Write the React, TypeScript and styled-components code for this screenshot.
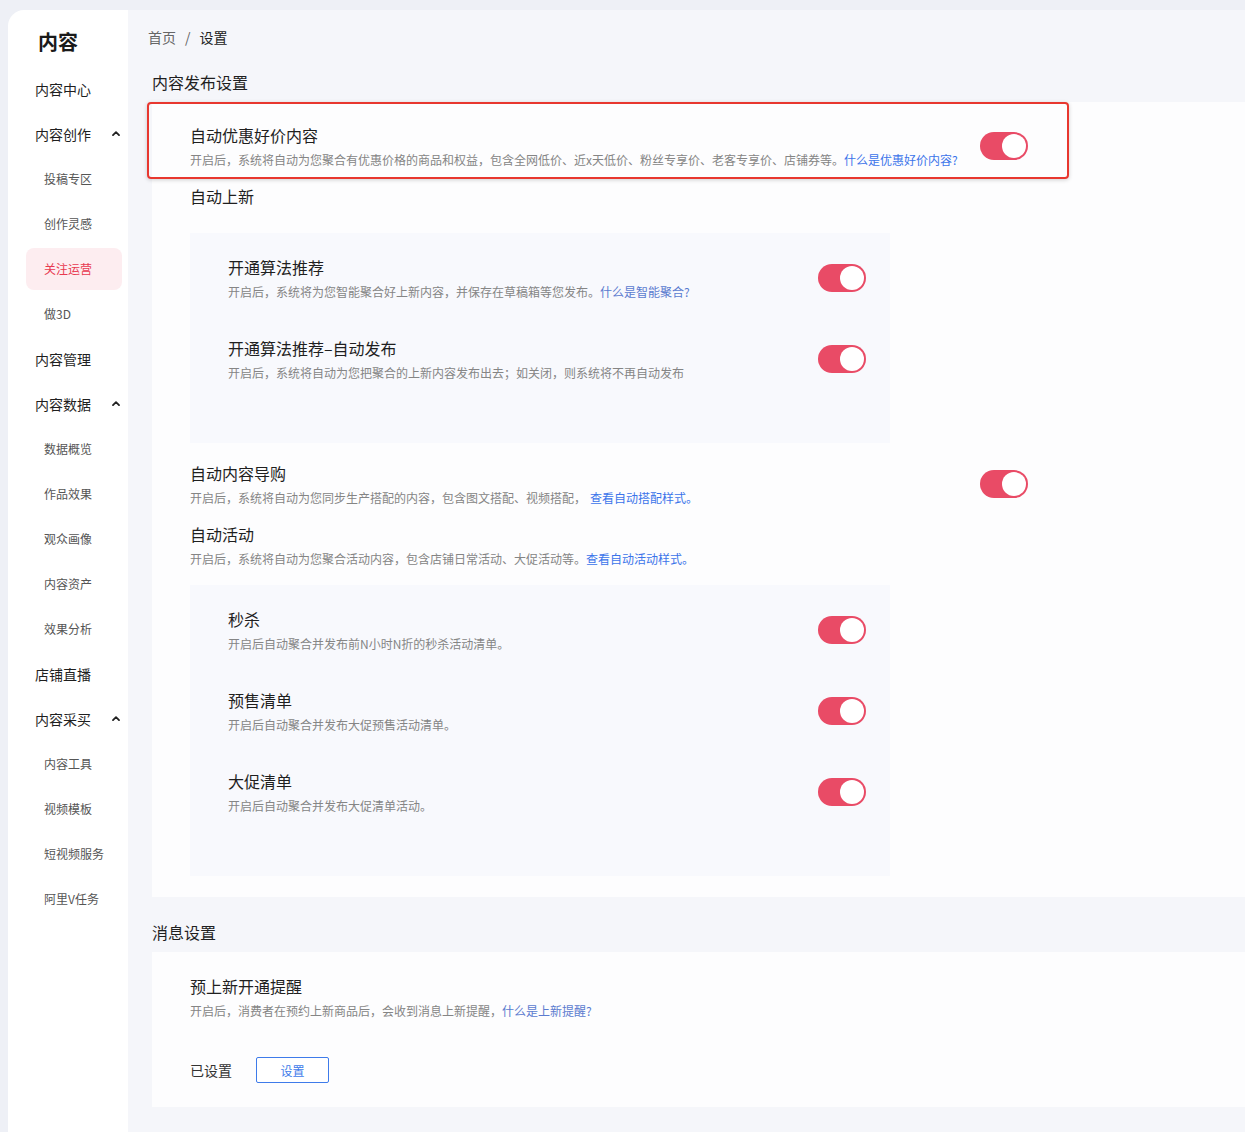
import React from "react";
import styled, { createGlobalStyle } from "styled-components";

const GlobalStyle = createGlobalStyle`
  body {
    margin: 0;
    background: #eef0f6;
    font-family: "Noto Sans CJK SC", "Noto Sans", sans-serif;
    color: #222;
  }
  * { box-sizing: border-box; }
`;

type MenuGroup = { label: string; children?: string[] };

const menu: MenuGroup[] = [
  { label: "内容中心" },
  { label: "内容创作", children: ["投稿专区", "创作灵感", "关注运营", "做3D"] },
  { label: "内容管理" },
  { label: "内容数据", children: ["数据概览", "作品效果", "观众画像", "内容资产", "效果分析"] },
  { label: "店铺直播" },
  { label: "内容采买", children: ["内容工具", "视频模板", "短视频服务", "阿里V任务"] },
];

const activeItem = "关注运营";

const Chevron = () => (
  <svg width="8" height="5" viewBox="0 0 8 5">
    <path d="M1 4.2 L4 1.2 L7 4.2" fill="none" stroke="#222" strokeWidth="1.8" strokeLinecap="round" strokeLinejoin="round" />
  </svg>
);

type SettingProps = {
  title: string;
  desc: string;
  link?: string;
  muted?: boolean;
  linkGap?: boolean;
};

const SettingText: React.FC<SettingProps> = ({ title, desc, link, muted, linkGap }) => (
  <TextBlock>
    <ItemTitle>{title}</ItemTitle>
    <ItemDesc>
      {desc}
      {link && (
        <Link $muted={muted} $gap={linkGap}>
          {link}
        </Link>
      )}
    </ItemDesc>
  </TextBlock>
);

const Toggle = () => (
  <Track>
    <Knob />
  </Track>
);

const App: React.FC = () => {
  return (
    <>
      <GlobalStyle />
      <Layout>
        <Sidebar>
          <Logo>内容</Logo>
          {menu.map((group) => (
            <React.Fragment key={group.label}>
              <TopItem>
                <span>{group.label}</span>
                {group.children && <Chevron />}
              </TopItem>
              {group.children?.map((child) => (
                <SubItem key={child}>
                  <SubPill $active={child === activeItem}>{child}</SubPill>
                </SubItem>
              ))}
            </React.Fragment>
          ))}
        </Sidebar>

        <Main>
          <Breadcrumb>
            <Crumb>首页</Crumb>
            <Sep>/</Sep>
            <Crumb $current>设置</Crumb>
          </Breadcrumb>

          <SectionTitle>内容发布设置</SectionTitle>
          <Card>
            <Highlight>
              <Row>
                <SettingText
                  title="自动优惠好价内容"
                  desc="开启后，系统将自动为您聚合有优惠价格的商品和权益，包含全网低价、近x天低价、粉丝专享价、老客专享价、店铺券等。"
                  link="什么是优惠好价内容?"
                />
                <Toggle />
              </Row>
            </Highlight>

            <GroupTitle>自动上新</GroupTitle>
            <SubPanel>
              <SubRow>
                <SettingText
                  title="开通算法推荐"
                  desc="开启后，系统将为您智能聚合好上新内容，并保存在草稿箱等您发布。"
                  link="什么是智能聚合?"
                  muted
                />
                <Toggle />
              </SubRow>
              <SubRow>
                <SettingText
                  title="开通算法推荐–自动发布"
                  desc="开启后，系统将自动为您把聚合的上新内容发布出去；如关闭，则系统将不再自动发布"
                />
                <Toggle />
              </SubRow>
            </SubPanel>

            <GuideRow>
              <SettingText
                title="自动内容导购"
                desc="开启后，系统将自动为您同步生产搭配的内容，包含图文搭配、视频搭配，"
                link="查看自动搭配样式。"
                linkGap
              />
              <Toggle />
            </GuideRow>

            <ActivityBlock>
              <SettingText
                title="自动活动"
                desc="开启后，系统将自动为您聚合活动内容，包含店铺日常活动、大促活动等。"
                link="查看自动活动样式。"
              />
            </ActivityBlock>

            <SubPanel $top={17}>
              <SubRow>
                <SettingText title="秒杀" desc="开启后自动聚合并发布前N小时N折的秒杀活动清单。" />
                <Toggle />
              </SubRow>
              <SubRow>
                <SettingText title="预售清单" desc="开启后自动聚合并发布大促预售活动清单。" />
                <Toggle />
              </SubRow>
              <SubRow>
                <SettingText title="大促清单" desc="开启后自动聚合并发布大促清单活动。" />
                <Toggle />
              </SubRow>
            </SubPanel>
          </Card>

          <SectionTitle $top={23}>消息设置</SectionTitle>
          <MessageCard>
            <SettingText
              title="预上新开通提醒"
              desc="开启后，消费者在预约上新商品后，会收到消息上新提醒，"
              link="什么是上新提醒?"
              muted
            />
            <Footer>
              <Status>已设置</Status>
              <SetButton type="button">设置</SetButton>
            </Footer>
          </MessageCard>
        </Main>
      </Layout>
    </>
  );
};

export default App;

// Styled Components
const Layout = styled.div`
  display: flex;
  min-height: 100vh;
  padding: 10px 0 0 8px;
`;

const Sidebar = styled.nav`
  width: 120px;
  flex-shrink: 0;
  background: #fff;
  border-top-left-radius: 16px;
  padding-top: 18px;
`;

const Logo = styled.div`
  font-size: 20px;
  font-weight: 700;
  line-height: 28px;
  height: 28px;
  padding-left: 30px;
  margin-bottom: 11px;
  color: #1a1a1a;
`;

const TopItem = styled.div`
  height: 45px;
  display: flex;
  align-items: center;
  justify-content: space-between;
  padding: 0 8px 2px 27px;
  font-size: 14px;
  color: #1f1f1f;
  font-weight: 400;
`;

const SubItem = styled.div`
  height: 45px;
  display: flex;
  align-items: center;
  padding: 0 6px 2px 18px;
`;

const SubPill = styled.div<{ $active?: boolean }>`
  flex: 1;
  height: 42px;
  display: flex;
  align-items: center;
  padding-left: 18px;
  border-radius: 8px;
  font-size: 12px;
  background: ${(p) => (p.$active ? "#fdedf0" : "transparent")};
  color: ${(p) => (p.$active ? "#e8394f" : "#555")};
`;

const Main = styled.main`
  flex: 1;
  min-width: 0;
  background: #f5f6fa;
  padding: 17px 0 24px 20px;
`;

const Breadcrumb = styled.div`
  display: flex;
  align-items: center;
  height: 20px;
  font-size: 14px;
  line-height: 20px;
`;

const Crumb = styled.span<{ $current?: boolean }>`
  color: ${(p) => (p.$current ? "#222" : "#666")};
`;

const Sep = styled.span`
  color: #666;
  margin: 0 9px;
`;

const SectionTitle = styled.h2<{ $top?: number }>`
  margin: ${(p) => p.$top ?? 23}px 0 8px 4px;
  font-size: 16px;
  font-weight: 400;
  line-height: 24px;
  color: #1f1f1f;
`;

const Card = styled.section`
  margin-left: 4px;
  background: #fdfdfe;
  padding: 0 0 21px 38px;
`;

const Highlight = styled.div`
  margin: 1px 0 0 -43px;
  width: 922px;
  border: 2px solid #e8372f;
  border-radius: 4px;
  box-shadow: 0 1px 4px rgba(0, 0, 0, 0.18);
  padding: 19px 39px 8px 41px;
`;

const Row = styled.div`
  width: 838px;
  display: flex;
  align-items: center;
  justify-content: space-between;
`;

const GuideRow = styled(Row)`
  margin-top: 18px;
`;

const ActivityBlock = styled.div`
  margin-top: 15px;
`;

const TextBlock = styled.div`
  display: flex;
  flex-direction: column;
`;

const ItemTitle = styled.div`
  font-size: 16px;
  line-height: 24px;
  color: #1f1f1f;
`;

const ItemDesc = styled.div`
  margin-top: 4px;
  font-size: 12px;
  line-height: 18px;
  color: #858585;
  white-space: nowrap;
`;

const Link = styled.span<{ $muted?: boolean; $gap?: boolean }>`
  color: ${(p) => (p.$muted ? "#5b7bcf" : "#3b74ea")};
  margin-left: ${(p) => (p.$gap ? "4px" : "0")};
`;

const GroupTitle = styled.div`
  margin-top: 5px;
  font-size: 16px;
  line-height: 24px;
  color: #1f1f1f;
`;

const SubPanel = styled.div<{ $top?: number }>`
  margin-top: ${(p) => p.$top ?? 25}px;
  width: 700px;
  background: #f8f9fd;
  padding: 22px 24px 61px 38px;
  display: flex;
  flex-direction: column;
  gap: 35px;
`;

const SubRow = styled.div`
  display: flex;
  align-items: center;
  justify-content: space-between;
`;

const Track = styled.span`
  width: 48px;
  height: 28px;
  flex-shrink: 0;
  border-radius: 14px;
  background: #e94b66;
  display: flex;
  align-items: center;
  justify-content: flex-end;
  padding-right: 2px;
`;

const Knob = styled.span`
  width: 24px;
  height: 24px;
  border-radius: 50%;
  background: #fff;
`;

const MessageCard = styled.section`
  margin-left: 4px;
  background: #fdfdfe;
  padding: 22px 0 24px 38px;
`;

const Footer = styled.div`
  margin-top: 37px;
  display: flex;
  align-items: center;
  gap: 24px;
`;

const Status = styled.span`
  font-size: 14px;
  color: #333;
`;

const SetButton = styled.button`
  width: 73px;
  height: 26px;
  border: 1px solid #3e7bea;
  border-radius: 2px;
  background: #fff;
  color: #3e7bea;
  font-family: inherit;
  font-size: 12px;
  padding: 0;
  cursor: pointer;
`;
